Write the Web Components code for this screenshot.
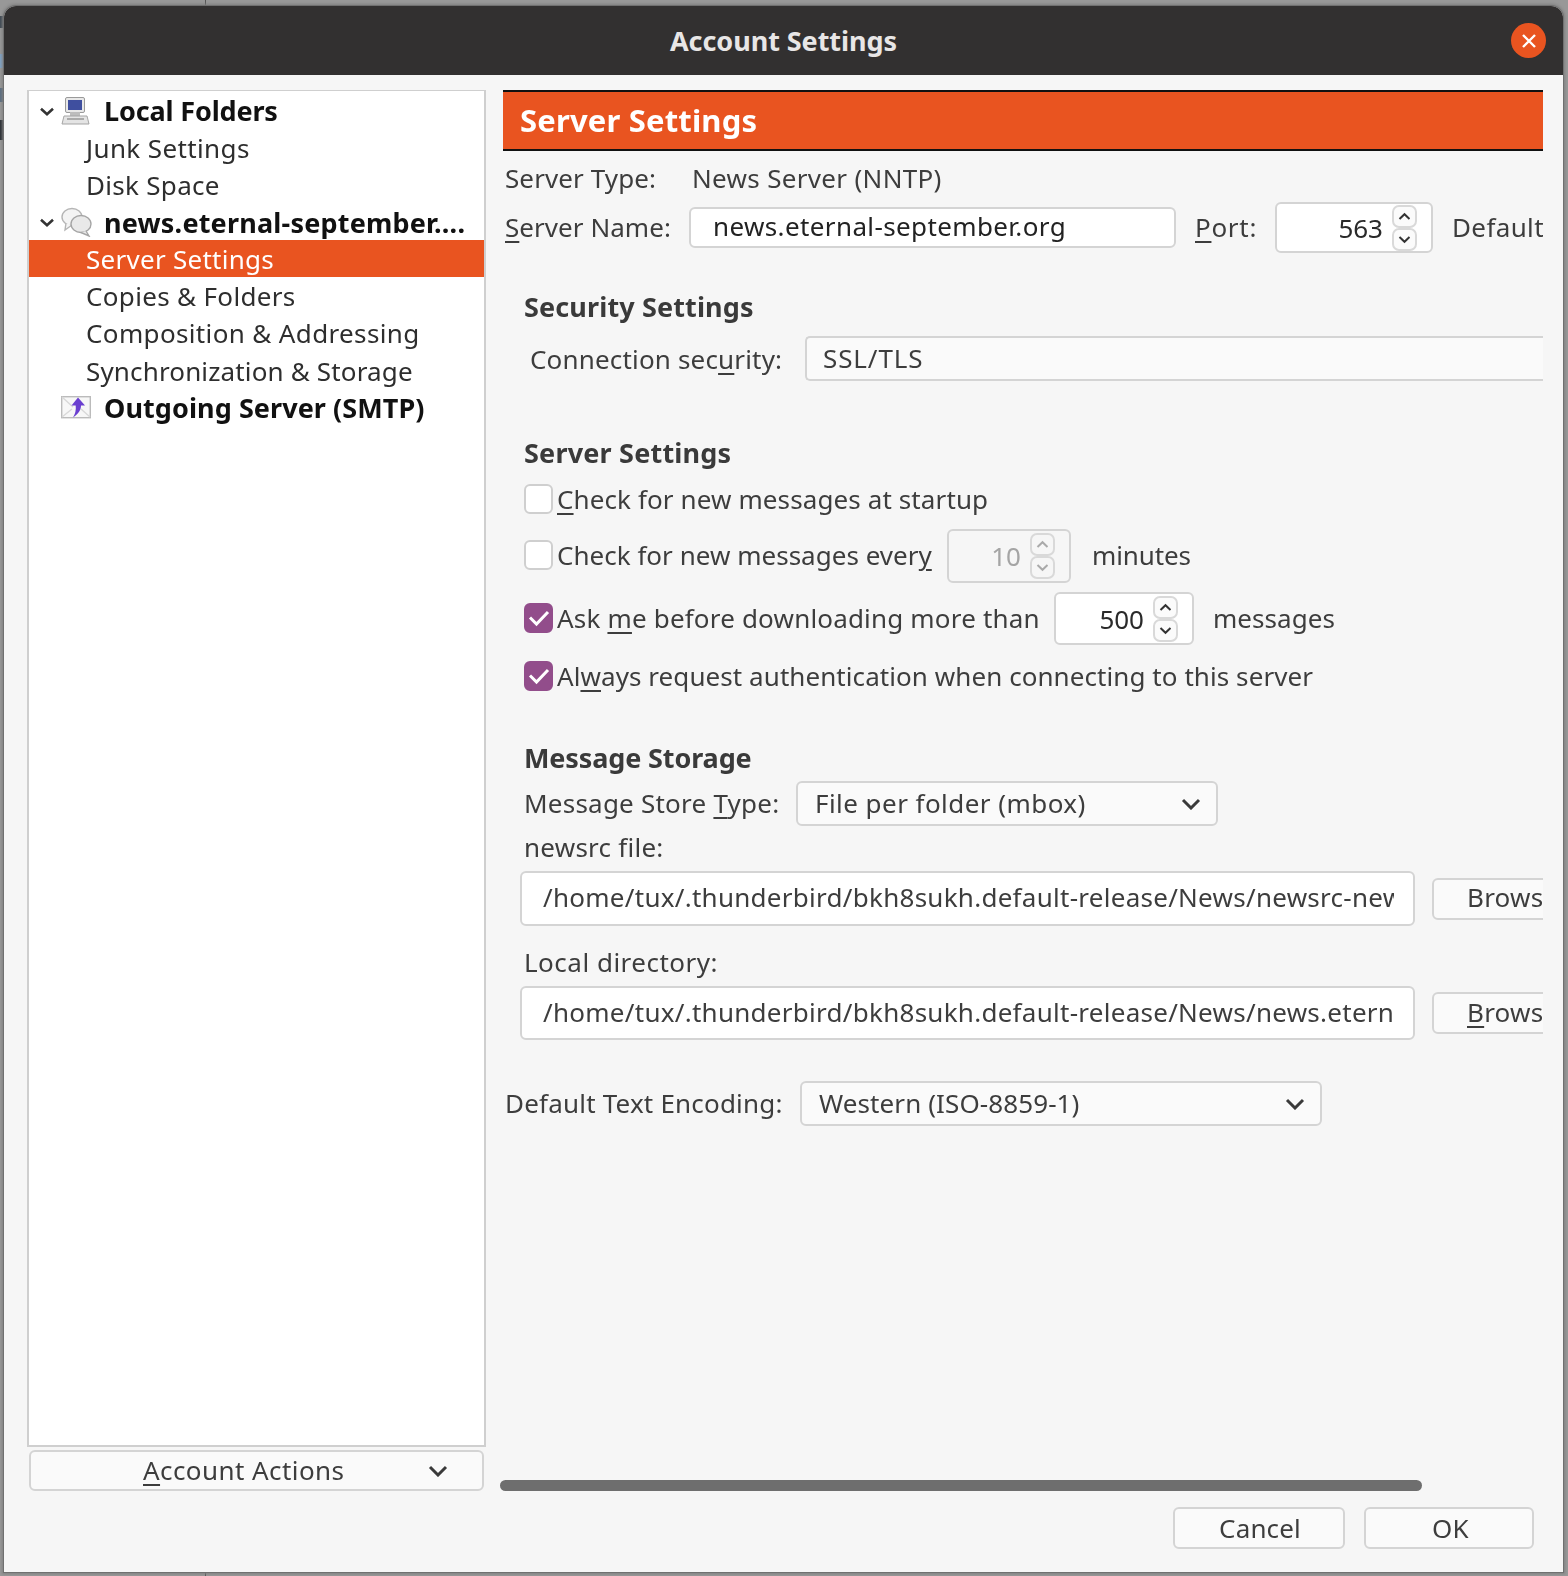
<!DOCTYPE html>
<html><head><meta charset="utf-8"><style>
html,body{margin:0;padding:0;width:1568px;height:1576px;overflow:hidden}
body{font-family:"Noto Sans","Open Sans",sans-serif;font-size:26px;color:#3d3d3d;
background:
 linear-gradient(#555,#555) 205px 0/1px 5px no-repeat,
 linear-gradient(#555,#555) 205px 1573px/1px 3px no-repeat,
 linear-gradient(#3c4650,#3c4650) 0 16px/4px 12px no-repeat,
 linear-gradient(#7fa3c6,#7fa3c6) 0 54px/3px 14px no-repeat,
 linear-gradient(#5a6c80,#5a6c80) 0 88px/4px 14px no-repeat,
 linear-gradient(#262a30,#262a30) 0 120px/4px 20px no-repeat,
 #989898}
u{text-decoration-thickness:1.5px;text-underline-offset:4px}
</style></head><body>
<ac-window heading="Account Settings">
  <ac-col slot="left">
    <ac-tree>
      <ac-row kind="computer" bold expand style="letter-spacing:-.15px">Local Folders</ac-row>
      <ac-row style="letter-spacing:.38px">Junk Settings</ac-row>
      <ac-row>Disk Space</ac-row>
      <ac-row kind="news" bold expand style="letter-spacing:.2px">news.eternal-september....</ac-row>
      <ac-row selected style="letter-spacing:.27px">Server Settings</ac-row>
      <ac-row style="letter-spacing:.33px">Copies &amp; Folders</ac-row>
      <ac-row style="letter-spacing:.36px">Composition &amp; Addressing</ac-row>
      <ac-row style="letter-spacing:.15px">Synchronization &amp; Storage</ac-row>
      <ac-row kind="smtp" bold style="letter-spacing:.07px">Outgoing Server (SMTP)</ac-row>
    </ac-tree>
    <ac-select wide center style="margin:3px 2px 0 2px;height:41px;letter-spacing:.43px"><u>A</u>ccount Actions</ac-select>
  </ac-col>
  <ac-pane slot="right">
    <ac-header>Server Settings</ac-header>
    <ac-line style="margin-top:8px;height:40px;padding-left:5px"><ac-t w="187" style="letter-spacing:.1px">Server Type:</ac-t><ac-t style="letter-spacing:.32px">News Server (NNTP)</ac-t></ac-line>
    <ac-line style="margin-top:3px;height:51px;padding-left:5px">
      <ac-t w="184" style="letter-spacing:.05px"><u>S</u>erver Name:</ac-t><ac-input style="width:487px;height:41px;padding-left:22px;color:#222;letter-spacing:.38px">news.eternal-september.org</ac-input>
      <ac-t style="margin-left:19px;letter-spacing:.7px" w="80"><u>P</u>ort:</ac-t><ac-spin value="563" style="width:158px;height:51px"></ac-spin>
      <ac-t style="margin-left:19px;letter-spacing:.37px">Default</ac-t>
    </ac-line>
    <ac-heading style="margin-top:39px;letter-spacing:.13px">Security Settings</ac-heading>
    <ac-line style="margin-top:14px;height:45px;padding-left:30px">
      <ac-t w="275" style="letter-spacing:.17px;padding-bottom:0">Connection sec<u>u</u>rity:</ac-t><ac-input plain nudge style="width:760px;height:45px;padding-left:16px;border-right:none;border-radius:5px 0 0 5px;letter-spacing:.9px">SSL/TLS</ac-input>
    </ac-line>
    <ac-heading style="margin-top:57px;letter-spacing:.2px">Server Settings</ac-heading>
    <ac-check style="margin-top:17px;height:30px;letter-spacing:.11px"><u>C</u>heck for new messages at startup</ac-check>
    <ac-check style="margin-top:14px;height:54px;letter-spacing:.02px" w="390">Check for new messages ever<u>y</u>
      <ac-spin slot="after" value="10" disabled style="width:124px;height:54px"></ac-spin>
      <ac-t slot="after" style="margin-left:21px;letter-spacing:-.1px">minutes</ac-t></ac-check>
    <ac-check checked style="margin-top:9px;height:53px;letter-spacing:.18px" w="497">Ask <u>m</u>e before downloading more than
      <ac-spin slot="after" value="500" style="width:140px;height:53px"></ac-spin>
      <ac-t slot="after" style="margin-left:19px;letter-spacing:.05px">messages</ac-t></ac-check>
    <ac-check checked style="margin-top:17px;height:30px;letter-spacing:.07px">Al<u>w</u>ays request authentication when connecting to this server</ac-check>
    <ac-heading style="margin-top:51px;letter-spacing:-.12px">Message Storage</ac-heading>
    <ac-line style="margin-top:8px;height:45px;padding-left:24px">
      <ac-t w="272" style="letter-spacing:.23px">Message Store <u>T</u>ype:</ac-t><ac-select style="width:422px;height:45px;letter-spacing:.45px">File per folder (mbox)</ac-select>
    </ac-line>
    <ac-line style="margin-top:7px;height:30px;padding-left:24px"><ac-t style="letter-spacing:.25px">newsrc file:</ac-t></ac-line>
    <ac-line style="margin-top:8px;height:55px;padding-left:20px">
      <ac-input style="width:895px;height:55px;padding:0 19px 0 21px;letter-spacing:.27px">/home/tux/.thunderbird/bkh8sukh.default-release/News/newsrc-new</ac-input>
      <ac-btn style="margin-left:17px;width:120px;height:42px;flex:none;justify-content:flex-start;padding:0 0 3px 33px;letter-spacing:.25px">Brows</ac-btn>
    </ac-line>
    <ac-line style="margin-top:22px;height:30px;padding-left:24px"><ac-t style="letter-spacing:.5px">Local directory:</ac-t></ac-line>
    <ac-line style="margin-top:8px;height:54px;padding-left:20px">
      <ac-input style="width:895px;height:54px;padding:0 19px 0 21px;letter-spacing:.27px">/home/tux/.thunderbird/bkh8sukh.default-release/News/news.etern</ac-input>
      <ac-btn style="margin-left:17px;width:120px;height:42px;flex:none;justify-content:flex-start;padding:0 0 3px 33px;letter-spacing:.25px"><u>B</u>rows</ac-btn>
    </ac-line>
    <ac-line style="margin-top:41px;height:45px;padding-left:5px">
      <ac-t w="295" style="letter-spacing:.2px">Default Text Encoding:</ac-t><ac-select style="width:522px;height:45px;letter-spacing:.1px">Western (ISO-8859-1)</ac-select>
    </ac-line>
    <ac-scroll></ac-scroll>
  </ac-pane>
  <ac-btn slot="buttons" style="width:172px;height:42px;letter-spacing:.15px;padding-left:2px">Cancel</ac-btn>
  <ac-btn slot="buttons" style="width:170px;height:42px;letter-spacing:.3px;padding-left:3px">OK</ac-btn>
</ac-window>
<script>
function def(name, css, html, extra){
  customElements.define(name, class extends HTMLElement{
    constructor(){super();const r=this.attachShadow({mode:'open'});r.innerHTML='<style>'+css+'</style>'+html;}
    connectedCallback(){ if(extra) extra(this,this.shadowRoot); }
  });
}
const chev='<svg width="20" height="12" viewBox="0 0 20 12"><path d="M2 2 10 10 18 2" fill="none" stroke="currentColor" stroke-width="3"/></svg>';
const ICONS={
computer:'<svg width="30" height="28" viewBox="0 0 30 28"><rect x="4.5" y=".5" width="19" height="15" rx="1.5" fill="#e8e8e8" stroke="#9a9a9a"/><rect x="7" y="3" width="14" height="10" fill="#3f4f9f"/><rect x="9" y="15" width="10" height="4" fill="#bdbdbd"/><path d="M3 19h23l2 8H1z" fill="#e4e4e4" stroke="#a5a5a5"/><path d="M6 22h17" stroke="#aaa" stroke-width="2"/></svg>',
news:'<svg width="32" height="30" viewBox="0 0 32 30"><ellipse cx="11" cy="10" rx="10" ry="8.5" fill="#f4f4f4" stroke="#b5b5b5" stroke-width="1.4"/><path d="M5 16 4 23l7-5" fill="#f4f4f4" stroke="#b5b5b5" stroke-width="1.4"/><ellipse cx="20" cy="17" rx="10" ry="8.5" fill="#e9e9e9" stroke="#a5a5a5" stroke-width="1.4"/><path d="M25 24l3 5-8-3.5" fill="#e9e9e9" stroke="#a5a5a5" stroke-width="1.4"/></svg>',
smtp:'<svg width="30" height="24" viewBox="0 0 30 24"><rect x=".7" y=".7" width="28.6" height="21" fill="#f7f7f7" stroke="#bbb" stroke-width="1.4"/><path d="M1 1l11 10M1 21l10-8M29 21l-9-8" stroke="#d8d8d8" stroke-width="1.4" fill="none"/><path d="M17 1.5 24 9.500H20c0 4-2 8-8 12 2.200-3.500 3.200-7.500 2.700-12H10.500z" fill="#6a3fd0"/></svg>'};

def('ac-window',`
:host{display:flex;flex-direction:column;box-sizing:border-box;width:1559px;height:1566px;margin:6px 0 0 4px;background:#f6f6f6;border-radius:12px 12px 0 0;box-shadow:0 0 0 1px #707070,0 0 3px 2px #808080;filter:blur(.55px);overflow:hidden}
.bar{flex:none;height:69px;background:#323030;color:#e8e6e6;display:flex;align-items:center;justify-content:center;position:relative;font-weight:700;font-size:27px;letter-spacing:-.05px}
.x{position:absolute;right:17px;top:17px;width:35px;height:35px;border-radius:50%;background:#e95420;display:flex;align-items:center;justify-content:center}
.main{flex:1;min-height:0;display:flex;padding:15px 0 0 23px;gap:14px}
.btns{flex:none;display:flex;justify-content:flex-end;gap:19px;padding:16px 29px 23px 0}
`,`<div class="bar"><span id="h"></span><div class="x"><svg width="16" height="16" viewBox="0 0 16 16"><path d="M2 2 14 14M14 2 2 14" stroke="#fff" stroke-width="2.4"/></svg></div></div>
<div class="main"><slot name="left"></slot><slot name="right"></slot></div><div class="btns"><slot name="buttons"></slot></div>`,
(e,r)=>{r.getElementById('h').textContent=e.getAttribute('heading')});

def('ac-col',':host{display:flex;flex-direction:column;width:459px;flex:none}','<slot></slot>');
def('ac-tree',':host{display:block;flex:1;background:#fff;border:2px solid #cfcfcf;border-width:1.5px 2px 2px 2px;padding-top:.5px;color:#2e2e2e}','<slot></slot>');
def('ac-row',`
:host{display:flex;align-items:center;height:37.15px;white-space:nowrap;padding-left:57px;box-sizing:border-box;font-size:26px;letter-spacing:.3px;padding-top:1px}
:host([selected]){background:#e95420;color:#fff}
:host([bold]){font-weight:700;font-size:27px;color:#111;padding-left:0}
.c{width:32px;display:flex;justify-content:flex-end;box-sizing:border-box;padding-right:6px;color:#333;padding-top:2px}
.i{width:43px;display:flex}
`,`<span id="pre" style="display:contents"></span><slot></slot>`,(e,r)=>{
  if(e.hasAttribute('bold')){
    r.getElementById('pre').innerHTML='<span class="c">'+(e.hasAttribute('expand')?'<svg width="16" height="11" viewBox="0 0 20 12"><path d="M2.500 2.500 10 9.500 17.500 2.500" fill="none" stroke="currentColor" stroke-width="3.200"/></svg>':'')+'</span><span class="i">'+(ICONS[e.getAttribute('kind')]||'')+'</span>';
  }
});
def('ac-pane',':host{display:flex;flex-direction:column;width:1043px;flex:none;overflow:hidden}','<slot></slot>');
def('ac-header',':host{display:flex;align-items:center;flex:none;height:61px;margin-left:3px;box-sizing:border-box;border-top:2px solid #111;border-bottom:2px solid #111;background:#e95420;color:#fff;font-weight:700;font-size:31px;letter-spacing:.17px;padding:0 0 2px 17px;white-space:nowrap}','<slot></slot>');
def('ac-heading',':host{display:flex;align-items:center;flex:none;box-sizing:border-box;height:30px;padding:0 0 2px 24px;font-weight:700;font-size:27px;color:#3a3a3a;white-space:nowrap}','<slot></slot>');
def('ac-line',':host{display:flex;align-items:center;flex:none;white-space:nowrap;width:1300px;box-sizing:border-box}','<slot></slot>');
def('ac-t',':host{display:block;flex:none;white-space:nowrap;padding-bottom:2px}','<slot></slot>',(e)=>{const w=e.getAttribute('w');if(w)e.style.width=w+'px'});
const boxcss=':host{display:flex;align-items:center;flex:none;box-sizing:border-box;background:#fff;border:2px solid #d4d4d4;border-radius:6px;white-space:nowrap;overflow:hidden}';
def('ac-input',boxcss+`:host([plain]){background:#fafafa}.in{display:block;overflow:hidden;width:100%;padding-bottom:3px}:host([nudge]) .in{padding-bottom:1px}`,'<span class="in"><slot></slot></span>');
def('ac-select',boxcss+`
:host{background:#fafafa;padding:0 15px 0 17px;justify-content:space-between;color:#3d3d3d}
:host([center]){justify-content:flex-start;padding:0}
:host([center]) .t{margin-left:112px}
:host([center]) .a{margin-left:auto;margin-right:34px}
.t{padding-bottom:2px}
.a{display:flex;color:#3a3a3a}`,'<span class="t"><slot></slot></span><span class="a">'+chev+'</span>');
def('ac-btn',boxcss+':host{background:#fafafa;justify-content:center}','<slot></slot>');
def('ac-scroll',':host{display:block;flex:none;height:11px;width:922px;border-radius:6px;background:#6e6e6e;margin-top:auto}','');
def('ac-spin',boxcss+`
:host{background:#fff;justify-content:flex-end;padding-right:14px;letter-spacing:0;color:#2a2a2a}
:host([disabled]){background:#f6f6f6;color:#a5a5a5}
.v{margin-right:9px}
.s{display:flex;flex-direction:column;width:25px}
.b{width:25px;height:23px;box-sizing:border-box;border:2px solid #d9d9d9;border-radius:7px;display:flex;align-items:center;justify-content:center;color:#333;background:#fbfbfb}
:host([disabled]) .b{color:#aaa;background:#f6f6f6}
`,`<span class="v" id="v"></span><span class="s"><span class="b"><svg width="13" height="9" viewBox="0 0 13 9"><path d="M1.500 7 6.500 2.200 11.500 7" fill="none" stroke="currentColor" stroke-width="2"/></svg></span><span class="b"><svg width="13" height="9" viewBox="0 0 13 9"><path d="M1.500 2 6.500 6.800 11.500 2" fill="none" stroke="currentColor" stroke-width="2"/></svg></span></span>`,
(e,r)=>{r.getElementById('v').textContent=e.getAttribute('value')});
def('ac-check',`
:host{display:flex;align-items:center;flex:none;white-space:nowrap;padding-left:24px;width:1300px;box-sizing:border-box}
.k{flex:none;width:29px;height:30px;box-sizing:border-box;border:2px solid #cfcfcf;border-radius:6px;background:#fff;margin:0 4px 2px 0;display:flex;align-items:center;justify-content:center}
:host([checked]) .k{background:#924d8b;border-color:#924d8b}
.k svg{display:none}:host([checked]) .k svg{display:block}
#lab{padding-bottom:2px}
`,`<span class="k"><svg width="22" height="18" viewBox="0 0 22 18"><path d="M2 8.500 8.500 15 20 3" fill="none" stroke="#fff" stroke-width="3"/></svg></span><span id="lab"><slot></slot></span><slot name="after"></slot>`,
(e,r)=>{const w=e.getAttribute('w');if(w){const l=r.getElementById('lab');l.style.display='block';l.style.flex='none';l.style.width=w+'px'}});
</script>
</body></html>
